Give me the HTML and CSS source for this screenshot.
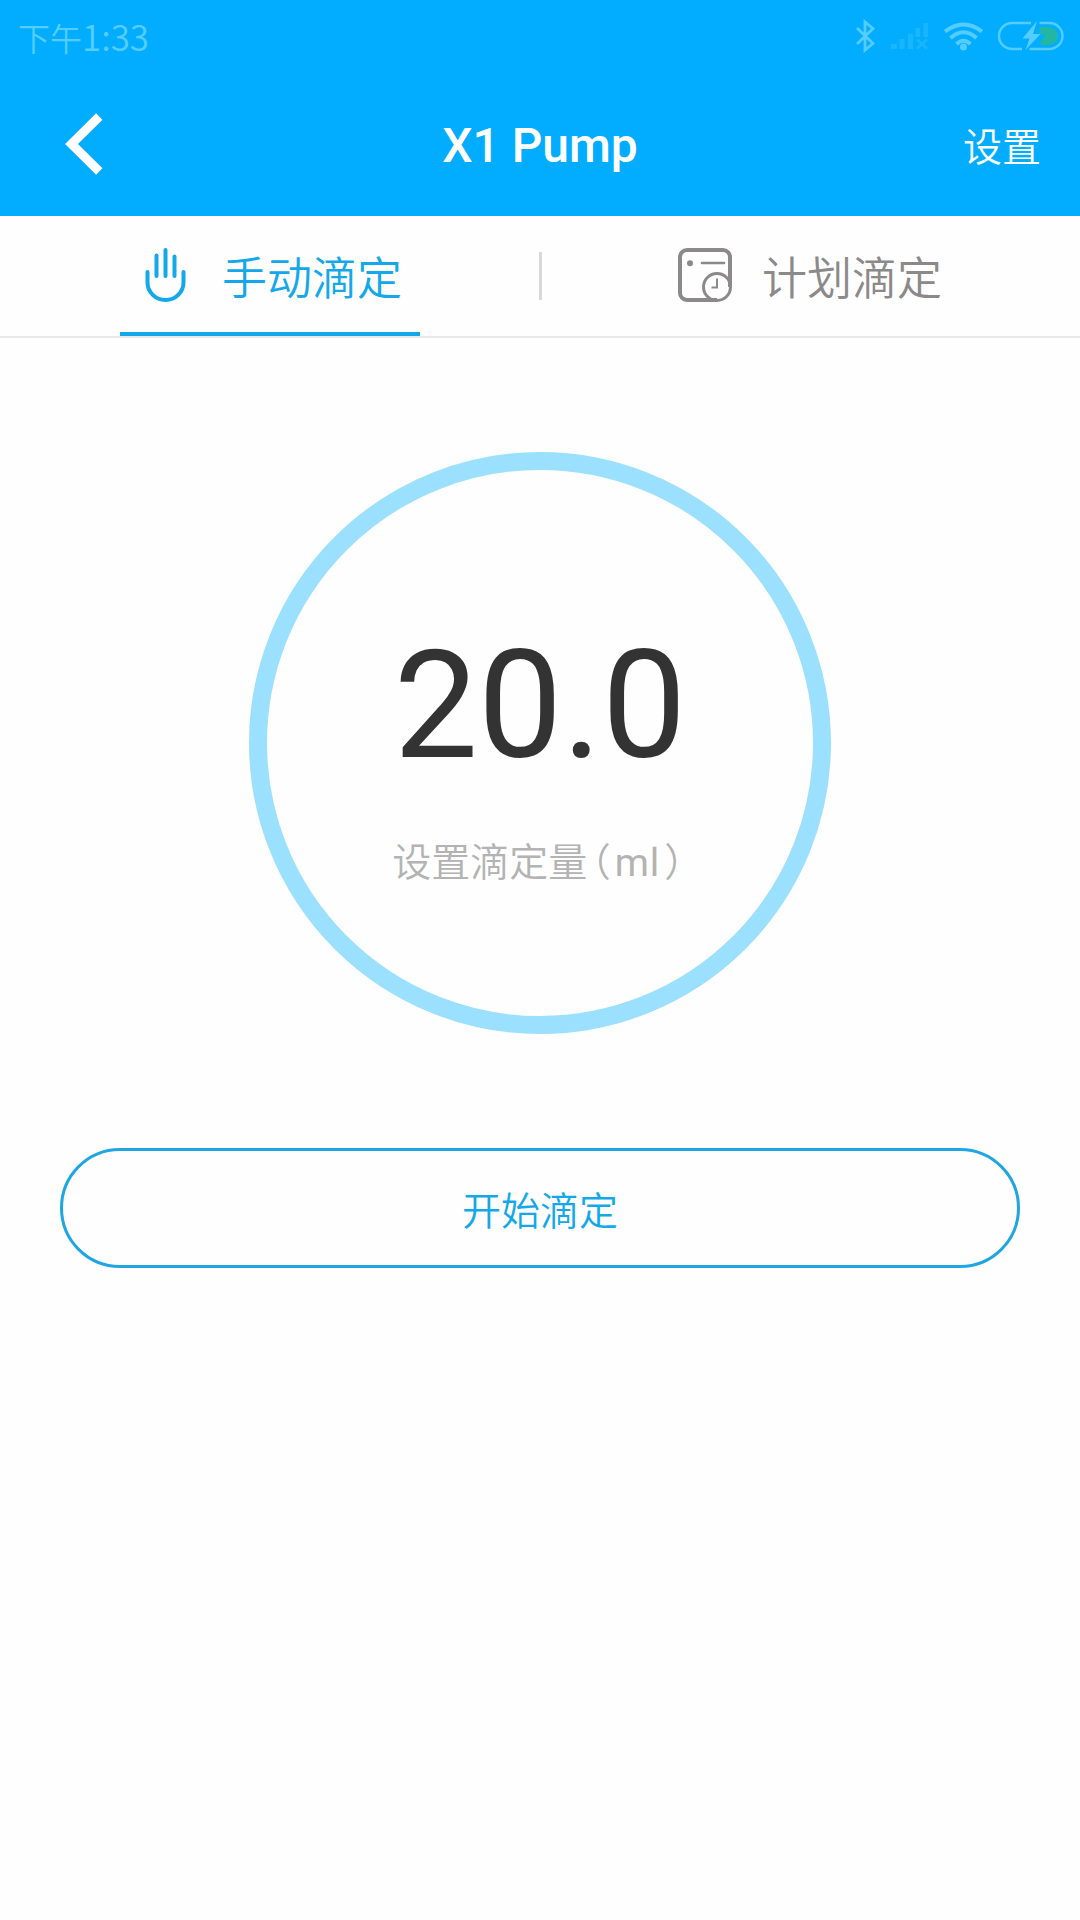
FILE: index.html
```html
<!DOCTYPE html>
<html lang="zh-CN">
<head>
    <meta charset="UTF-8">
    <meta name="viewport" content="width=device-width, initial-scale=1.0">
    <title>X1 Pump</title>
    <link rel="stylesheet" href="styles.css">
</head>
<body>
    <header class="header">
        <div class="status-bar">
            <div class="status-time">下午<span class="clock">1:33</span></div>
            <svg class="status-icons" width="212" height="40" viewBox="0 0 212 40" fill="none" stroke="#55ccff">
                <!-- Bluetooth -->
                <path d="M1 12L17 27.500L9 34V6L17 12.500L1 28" stroke-width="2.800"/>
                <!-- Signal -->
                <g fill="#1ab5ff" stroke="none">
                    <path d="M35 28h6v5h-6zM43.500 23h5v10h-5zM52 18h5v15h-5zM59.500 12h4.500v9h-4.500zM67.500 7h4.500v14h-4.500z"/>
                    <path d="M61 23.500L71 32.500M71 23.500L61 32.500" stroke="#1ab5ff" stroke-width="3"/>
                </g>
                <!-- Wifi -->
                <path d="M89 15.500Q107.500 1.500 126 15.500M94.500 22Q107.500 10.500 120.500 22M100.500 28Q107.500 21.500 114.500 28" stroke-width="4"/>
                <circle cx="107.500" cy="31" r="3.500" fill="#55ccff" stroke="none"/>
                <!-- Battery -->
                <path d="M183.500 11.500Q190 10 195 11.500A8.700 8.700 0 0 1 195 28.500Q189 30 183.500 28L189 18.500H183.500Z" fill="#22b7a2" stroke="none"/>
                <path d="M175 7H156A13 13 0 0 0 156 33H166M183.500 7H193.500A13 13 0 0 1 193.500 33H173.500" stroke-width="2.400"/>
                <path d="M181 5L166.500 22.500H173.500L169.500 34L184.500 18H177Z" fill="#55ccff" stroke="none"/>
            </svg>
        </div>
        <div class="nav-bar">
            <a class="back" href="#" aria-label="返回">
                <svg width="40" height="64" viewBox="0 0 40 64" fill="none" stroke="#fff" stroke-width="9">
                    <path d="M35.300 4.500L7.500 32L35.300 59.500"/>
                </svg>
            </a>
            <h1 class="title">X1 Pump</h1>
            <a class="settings" href="#">设置</a>
        </div>
    </header>

    <nav class="tabs">
        <a class="tab active" href="#">
            <svg width="54" height="54" viewBox="0 0 54 54" fill="none" stroke="#14a8eb" stroke-width="4" stroke-linecap="round">
                <path d="M18.500 7.500V28M27.500 2V28M36.500 8.500V28M9.500 24V34.500A18 17.500 0 0 0 45.500 34.500V24"/>
            </svg>
            <span>手动滴定</span>
        </a>
        <span class="divider"></span>
        <a class="tab" href="#">
            <svg width="54" height="54" viewBox="0 0 54 54" fill="none" stroke="#8b8989">
                <path d="M39 52H9A7 7 0 0 1 2 45V9A7 7 0 0 1 9 2H45A7 7 0 0 1 52 9V39" stroke-width="4"/>
                <circle cx="12" cy="15.300" r="3" fill="#8b8989" stroke="none"/>
                <path d="M24 15H46" stroke-width="2.600" stroke-linecap="round"/>
                <circle cx="39" cy="39" r="13.500" stroke-width="3"/>
                <path d="M39 30.500V39.500H33.500" stroke-width="2"/>
            </svg>
            <span>计划滴定</span>
        </a>
    </nav>

    <main class="content">
        <div class="dial">
            <div class="volume">20.0</div>
            <div class="volume-label">设置滴定量<span class="paren">（</span><span class="unit">ml</span><span class="paren">）</span></div>
        </div>
        <button class="start" type="button">开始滴定</button>
    </main>
</body>
</html>
```
FILE: styles.css
```css
* {
    box-sizing: border-box;
}
body {
    margin: 0;
    min-height: 1920px;
    background-color: #fefefe;
    font-family: Roboto, "Noto Sans CJK SC", sans-serif;
    font-weight: 350;
}
a {
    color: inherit;
    text-decoration: none;
}
svg {
    display: block;
}
.header {
    height: 216px;
    background-color: #02adff;
    color: #fff;
}
.status-bar {
    display: flex;
    justify-content: space-between;
    height: 72px;
    padding: 16px 12px 0 18px;
}
.status-time {
    color: #55ccff;
    font-family: "Noto Sans CJK SC", sans-serif;
    font-size: 32px;
    line-height: 42px;
}
.clock {
    font-size: 35px;
    line-height: 1;
}
.nav-bar {
    display: grid;
    grid-template-columns: 200px 1fr 200px;
    align-items: center;
    height: 144px;
    padding: 0 39px 0 64px;
}
.title {
    margin: 0;
    padding: 2px 25px 0 0;
    font-size: 48px;
    font-weight: 500;
    text-align: center;
}
.settings {
    padding-bottom: 1px;
    font-size: 39px;
    text-align: right;
}

/* Tabs */
.tabs {
    display: flex;
    align-items: center;
    height: 122px;
    border-bottom: 2px solid #e8e8e8;
    color: #8b8989;
}
.tab {
    position: relative;
    display: flex;
    flex: 1;
    align-items: center;
    justify-content: center;
    gap: 30px;
    height: 120px;
    padding-bottom: 2px;
    font-size: 45px;
}
.tab.active {
    color: #14a8eb;
}
.tab.active::after {
    content: "";
    position: absolute;
    bottom: 0;
    left: 120px;
    width: 300px;
    height: 4px;
    background-color: #14a8eb;
}
.divider {
    width: 3px;
    height: 48px;
    margin: 0 -1.5px;
    background-color: #d8d8d8;
}

/* Manual dosing */
.content {
    display: flex;
    flex-direction: column;
    align-items: center;
    padding: 114px 60px 0;
}
.dial {
    display: flex;
    flex-direction: column;
    align-items: center;
    width: 582px;
    height: 582px;
    padding-top: 148px;
    border: 18px solid #9be0ff;
    border-radius: 50%;
}
.volume {
    color: #333;
    font-size: 150px;
    font-weight: 400;
    line-height: 176px;
}
.volume-label {
    display: flex;
    margin-top: 40px;
    color: #b3b3b3;
    font-size: 39px;
    line-height: 58px;
}
/* half-width forms of the full-width brackets */
.paren {
    margin: 0 4px;
    font-feature-settings: "halt";
}
.unit {
    font-weight: 400;
    letter-spacing: 1px;
}
.start {
    width: 100%;
    height: 120px;
    margin-top: 114px;
    border: 3px solid #1fa6e2;
    border-radius: 60px;
    background: none;
    color: #14a8eb;
    font-family: inherit;
    font-size: 39px;
    font-weight: 350;
}
```
